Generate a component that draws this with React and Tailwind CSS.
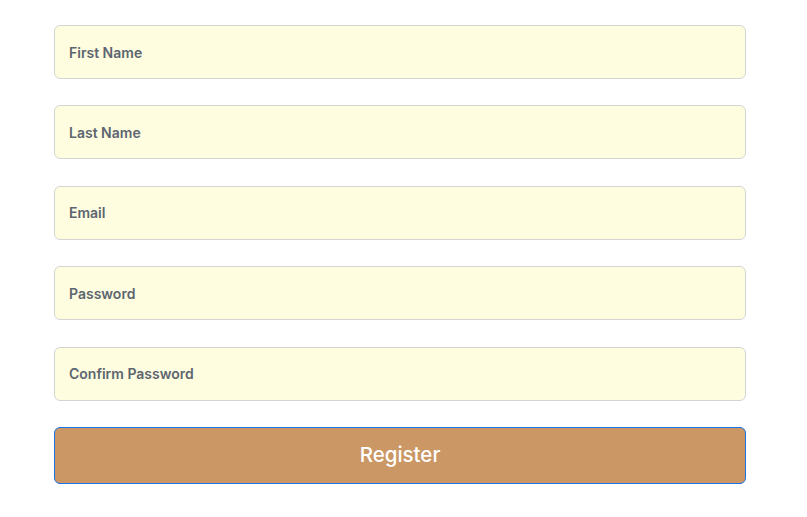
import { useState } from 'react'

const FIELDS = [
  { key: 'firstName', label: 'First Name', type: 'text' },
  { key: 'lastName', label: 'Last Name', type: 'text' },
  { key: 'email', label: 'Email', type: 'email' },
  { key: 'password', label: 'Password', type: 'password' },
  { key: 'confirm', label: 'Confirm Password', type: 'password' },
]

export default function App() {
  const [form, setForm] = useState({})

  return (
    <div className="min-h-screen bg-white" style={{ fontFamily: 'Inter, Lato, sans-serif' }}>
      <form onSubmit={e => e.preventDefault()} className="px-[54px] pt-[25px] w-[800px] flex flex-col gap-[26.4px]">
        {FIELDS.map(f => (
          <input
            key={f.key}
            type={f.type}
            placeholder={f.label}
            value={form[f.key] || ''}
            onChange={e => setForm(s => ({ ...s, [f.key]: e.target.value }))}
            className="h-[54px] w-full rounded-md border border-[#d4d4d4] bg-[#fffddf] px-[14px] text-[14px] font-semibold text-[#5c6570] placeholder:text-[#5c6570] outline-none"
          />
        ))}
        <button type="submit" className="h-[57px] w-full rounded-md border border-[#1a73e8] bg-[#cb9765] text-[20.5px] font-medium text-white">
          Register
        </button>
      </form>
    </div>
  )
}
